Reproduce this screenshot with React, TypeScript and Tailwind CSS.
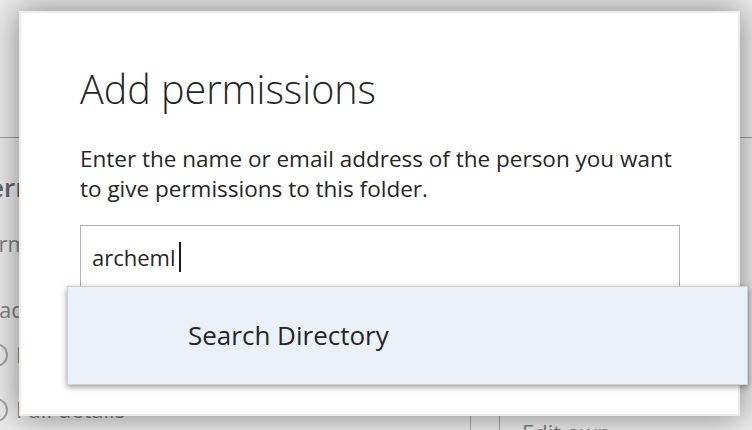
import React from 'react'

const FONT = { fontFamily: '"Open Sans", "Noto Sans", sans-serif' }

function BackgroundPage() {
  return (
    <div className="absolute inset-0 bg-white text-[#8c8c8c]" style={FONT}>
      <div className="h-[138px] border-b border-[#b0b0b0]" />
      <div className="flex">
        <div className="w-[200px] flex flex-col">
          <div className="-ml-[27px] mt-[32px] text-[26px] font-semibold text-[#6e6e6e] leading-[34px] whitespace-nowrap">Permissions</div>
          <div className="-ml-[27px] mt-[24px] text-[22px] leading-[30px] whitespace-nowrap">Permission level</div>
          <div className="-ml-[27px] mt-[36px] text-[22px] leading-[30px] whitespace-nowrap">Read</div>
          <div className="-ml-[16px] mt-[14px] flex items-center gap-[8px]">
            <span className="w-[24px] h-[24px] rounded-full border-2 border-[#b4b4b4]" />
            <span className="text-[22px] whitespace-nowrap">Full details</span>
          </div>
          <div className="-ml-[16px] mt-[22px] flex items-center gap-[8px]">
            <span className="w-[24px] h-[24px] rounded-full border-2 border-[#b4b4b4]" />
            <span className="text-[22px] whitespace-nowrap">Full details</span>
          </div>
        </div>
        <div className="ml-[270px] mt-[278px] flex h-[40px]">
          <div className="w-[30px] border-x border-[#b4b4b4]" />
          <div className="pl-[22px] text-[22px] leading-[30px] pt-[1px] whitespace-nowrap">Edit own</div>
        </div>
      </div>
      <div className="absolute inset-0 bg-black/[0.08]" />
    </div>
  )
}

export default function App() {
  return (
    <div className="relative w-[752px] h-[430px] overflow-hidden" style={FONT}>
      <BackgroundPage />
      <div className="absolute left-[19px] top-[11px] w-[721px] h-[405px] bg-white border-2 border-[#ececec] shadow-[0_0_30px_rgba(0,0,0,0.45)]">
        <div className="pl-[59px] pt-[48px]">
          <h2 className="text-[39.5px] font-light leading-[56px] text-[#262626]">Add permissions</h2>
          <p className="mt-[27px] w-[600px] text-[22.5px] leading-[30px] text-[#262626]">
            Enter the name or email address of the person you want to give permissions to this folder.
          </p>
          <div className="relative mt-[21px] w-[600px] h-[66px] border border-[#b3b3b3]">
            <div className="flex items-center h-[62px] pl-[11px] text-[22px] text-[#262626]">
              archeml
              <span className="ml-[3px] w-[2px] h-[30px] bg-[#1a1a1a]" />
            </div>
            <div className="absolute left-[-14px] top-[60px] w-[681px] h-[99px] bg-[#eaf1f9] border border-[#d0d0d0] shadow-[0_2px_6px_rgba(0,0,0,0.4)] flex items-center pl-[120px]">
              <span className="text-[26px] text-[#262626]">Search Directory</span>
            </div>
          </div>
        </div>
      </div>
    </div>
  )
}
